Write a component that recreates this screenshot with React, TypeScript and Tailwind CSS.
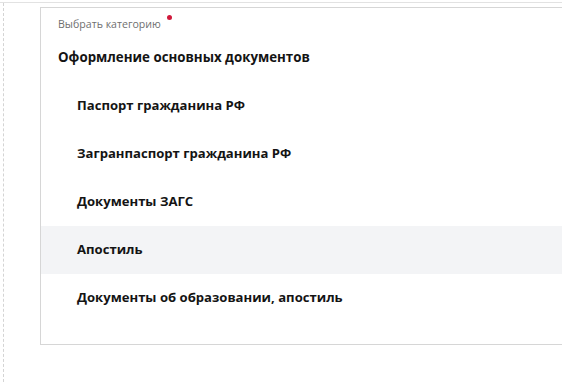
const items = [
  'Паспорт гражданина РФ',
  'Загранпаспорт гражданина РФ',
  'Документы ЗАГС',
  'Апостиль',
  'Документы об образовании, апостиль',
]

export default function App() {
  return (
    <div
      className="h-screen w-full overflow-hidden bg-white pt-[2px]"
      style={{ fontFamily: '"Open Sans", "Noto Sans", sans-serif' }}
    >
      <div className="flex h-full border-t border-[#e2e2e2]">
        <div className="ml-[3px] h-full border-l border-dashed border-[#d4d4d4]" />
        <div className="ml-[36px] mt-[4px] flex-1">
          <div className="w-[560px] border border-[#d6d6d6] bg-white pb-[22px]">
            <div className="flex items-start pl-[17px] pt-[9px]">
              <span className="text-[10.6px] leading-[14px] text-[#6f6f6f]">Выбрать категорию</span>
              <span className="ml-[6px] mt-[-2px] h-[5px] w-[5px] rounded-full bg-[#d0193b]" />
            </div>
            <div className="mt-[3px] flex h-12 items-center pl-[17px] text-[13.3px] font-bold text-[#141414]">
              Оформление основных документов
            </div>
            {items.map((item) => (
              <div
                key={item}
                className={
                  item === 'Апостиль'
                    ? 'flex h-12 items-center bg-[#f3f4f6] pl-[36px] text-[13.1px] font-bold text-[#141414]'
                    : 'flex h-12 items-center pl-[36px] text-[13.1px] font-bold text-[#141414]'
                }
              >
                {item}
              </div>
            ))}
          </div>
        </div>
      </div>
    </div>
  )
}
